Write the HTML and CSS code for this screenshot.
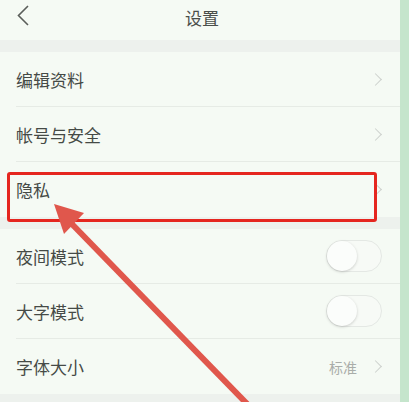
FILE: index.html
```html
<!DOCTYPE html>
<html lang="zh-CN">
<head>
    <meta charset="UTF-8">
    <title>设置</title>
    <link rel="stylesheet" href="styles.css">
</head>
<body>
    <div class="frame">
        <div class="screen">
            <div class="header">
                <svg class="back" width="14" height="22" viewBox="0 0 14 22"><path d="M12 1 L2.5 10.5 L12 20" fill="none" stroke="#5a5e5a" stroke-width="1.6"/></svg>
                <span class="title">设置</span>
            </div>
            <div class="band"></div>
            <div class="group">
                <div class="row"><span class="label">编辑资料</span><span class="chev"></span></div>
                <div class="row"><span class="label">帐号与安全</span><span class="chev"></span></div>
                <div class="row last"><span class="label">隐私</span><span class="chev"></span></div>
            </div>
            <div class="band"></div>
            <div class="group">
                <div class="row"><span class="label">夜间模式</span><span class="switch"></span></div>
                <div class="row"><span class="label">大字模式</span><span class="switch"></span></div>
                <div class="row last"><span class="label">字体大小</span><span class="value">标准</span><span class="chev"></span></div>
            </div>
            <div class="band"></div>
        </div>
        <div class="edge"></div>

        <div class="highlight"></div>
        <svg class="arrow" width="409" height="402" viewBox="0 0 409 402">
            <line x1="253" y1="410" x2="68" y2="220" stroke="#e0574c" stroke-width="6"/>
            <polygon points="54,204 84,213 64,234" fill="#e0574c"/>
        </svg>
    </div>
</body>
</html>
```

FILE: styles.css
```css
body {
    margin: 0;
    font-family: "Noto Sans CJK SC", "Noto Sans", sans-serif;
    color: #454a46;
    background: #f4f9f3;
}
.frame {
    position: relative;
    display: flex;
    width: 409px;
    height: 402px;
    overflow: hidden;
}
.screen {
    width: 400px;
    background: #f5faf4;
}
.edge {
    flex: 1;
    background: #c5e5cc;
}
.header {
    position: relative;
    height: 40px;
    padding-bottom: 6px;
    box-sizing: border-box;
    display: flex;
    align-items: center;
    justify-content: center;
}
.back {
    position: absolute;
    left: 16px;
    top: 5px;
}
.title {
    font-size: 17px;
    color: #4a4e4a;
    margin-left: 4px;
}
.band {
    height: 12px;
    background: #edf1ed;
}
.row {
    height: 55px;
    margin-left: 16px;
    padding-right: 16px;
    display: flex;
    align-items: center;
    border-bottom: 1px solid #e6ebe5;
    box-sizing: border-box;
}
.row.last {
    border-bottom: none;
}
.group:last-of-type .row:last-child {
    height: 57px;
    padding-top: 4px;
}
.label {
    flex: 1;
    font-size: 17px;
}
.value {
    font-size: 14px;
    color: #a9ada9;
    margin-right: 14px;
}
.chev {
    width: 8px;
    height: 8px;
    border-top: 1.5px solid #cdd1cd;
    border-right: 1.5px solid #cdd1cd;
    transform: rotate(45deg);
    margin-right: 4px;
}
.switch {
    position: relative;
    width: 54px;
    height: 30px;
    border: 1px solid #e4e8e4;
    border-radius: 16px;
    margin-right: 2px;
    background: #f7faf6;
}
.switch::after {
    content: "";
    position: absolute;
    left: 0;
    top: 0;
    width: 30px;
    height: 30px;
    border-radius: 50%;
    background: #fbfdfb;
    box-shadow: 0 1px 3px rgba(0, 0, 0, 0.18);
}
.highlight {
    position: absolute;
    left: 7px;
    top: 172px;
    width: 364px;
    height: 44px;
    border: 3px solid #e5261f;
    border-radius: 3px;
}
.arrow {
    position: absolute;
    left: 0;
    top: 0;
}
```
